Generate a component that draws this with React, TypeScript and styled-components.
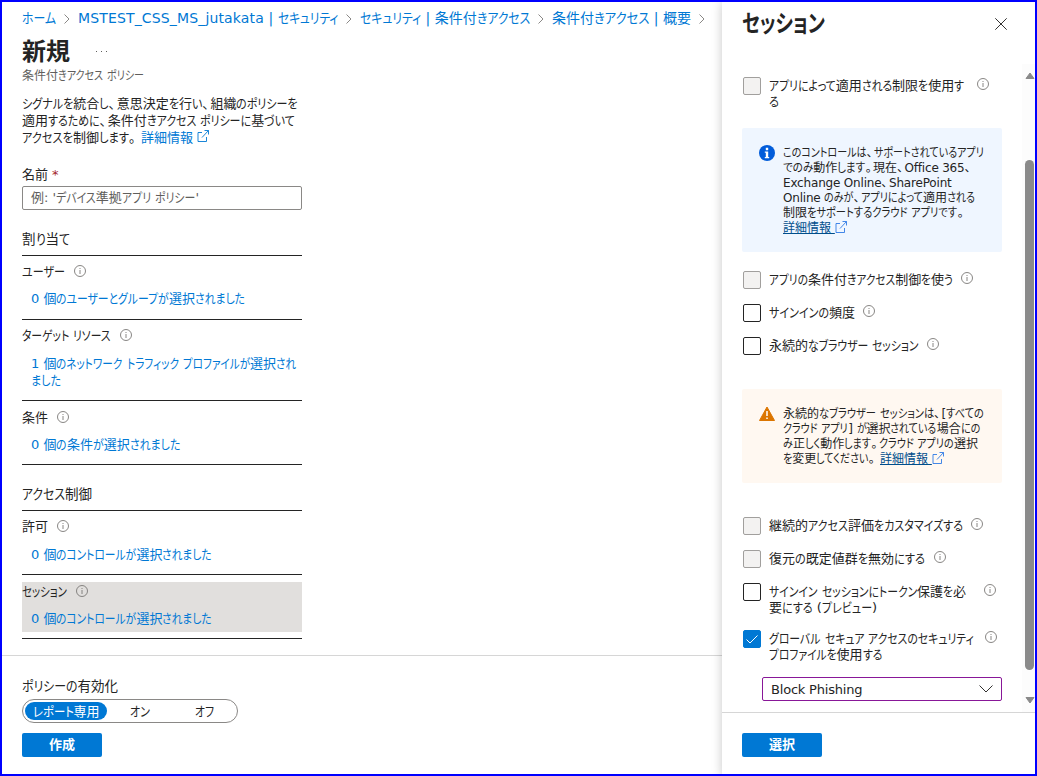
import React, { useLayoutEffect, useRef } from "react";
import styled, { createGlobalStyle, css } from "styled-components";

const Global = createGlobalStyle`
  *, *::before, *::after { box-sizing: border-box; }
  html, body { margin: 0; padding: 0; }
  body {
    width: 1037px; height: 776px; overflow: hidden; background: #fff; color: #242424;
    font: 13px/17px "DejaVu Sans", "Noto Sans CJK JP", sans-serif;
    font-feature-settings: "palt";
  }
  button { font: inherit; font-feature-settings: inherit; }
`;

const Nowrap = styled.span`white-space: pre;`;
const Kana = styled.span`display: inline-block; transform-origin: 0 50%;`;
const Mark = styled.span`letter-spacing: 1.5px;`;
const Latin = styled.span<{ $k: number }>`letter-spacing: ${(p) => p.$k}px;`;

/* Condenses the kana of a line, as a Japanese UI face does, so that the line is w pixels wide. */
function Jp({ t, w, k = -0.2 }: { t: string; w: number; k?: number }) {
  const line = useRef<HTMLSpanElement>(null);
  useLayoutEffect(() => {
    const el = line.current!;
    const runs = Array.from(el.querySelectorAll<HTMLElement>("[data-kana]"));
    runs.forEach((r) => { r.style.transform = ""; r.style.marginRight = ""; });
    const natural = runs.map((r) => r.getBoundingClientRect().width);
    const sum = natural.reduce((a, b) => a + b, 0);
    if (!sum) return;
    const scale = 1 + (w - el.getBoundingClientRect().width) / sum;
    runs.forEach((r, i) => {
      r.style.transform = `scaleX(${scale})`;
      r.style.marginRight = `${natural[i] * (scale - 1)}px`;
    });
  }, [t, w]);
  return (
    <Nowrap ref={line}>
      {t.split(/([ぁ-んァ-ヶー]+|[、。])/).filter(Boolean).map((s, i) =>
        /^[ぁ-んァ-ヶー]/.test(s) ? <Kana key={i} data-kana="">{s}</Kana>
          : /^[、。]/.test(s) ? <Mark key={i}>{s}</Mark>
          : /[A-Za-z]/.test(s) ? <Latin key={i} $k={k}>{s}</Latin> : s
      )}
    </Nowrap>
  );
}

const Frame = styled.div`
  display: grid; grid-template-columns: 720px 313px;
  width: 1037px; height: 776px; border: 2px solid #0000ff; overflow: hidden;
`;
const Main = styled.main`display: flex; flex-direction: column; min-width: 0;`;
const Form = styled.div`height: 653px; padding-left: 20px;`;
const Crumbs = styled.nav`
  display: flex; align-items: center; height: 32px; font-size: 14px; color: #0078d4;
  svg { margin: 1px 8px 0; flex: none; }
`;
const TitleRow = styled.div`display: flex; align-items: center; height: 34px; gap: 26px; padding-top: 1px;`;
const Title = styled.h1`margin: 0; font-size: 24px; line-height: 32px; font-weight: 700;`;
const Dots = styled.span`display: flex; gap: 4px; i { width: 1px; height: 1px; background: #605e5c; }`;
const Sub = styled.div`height: 18px; line-height: 17px; font-size: 12px; color: #605e5c;`;
const Desc = styled.p`margin: 9px 0 0; height: 51px; line-height: 17px;`;
const Line = styled.span<{ $h: number }>`display: flex; align-items: center; height: ${(p) => p.$h}px;`;
const Link = styled.a<{ $dark?: boolean }>`
  color: ${(p) => (p.$dark ? "#004e8c" : "#0078d4")};
  ${(p) => p.$dark && css`text-decoration: underline; text-underline-offset: 1px;`}
`;
const Label = styled.div`margin-top: 20px; height: 20px; line-height: 18px; b { color: #a4262c; font-weight: 400; margin-left: 4px; }`;
const Field = styled.div`
  width: 280px; height: 24px; padding-left: 8px; line-height: 22px; border: 1px solid #8a8886; border-radius: 2px; color: #605e5c;
`;
const Group = styled.h2`
  margin: 20px 0 0; width: 280px; height: 26px; line-height: 19px; font-size: 13.5px; font-weight: 400; border-bottom: 1px solid #242424;
`;
const Item = styled.section<{ $h: number }>`
  width: 280px; height: ${(p) => p.$h}px; padding: 7px 0 6px; border-bottom: 1px solid #242424;
`;
const ItemBody = styled.div<{ $active?: boolean; $up?: boolean }>`
  height: 100%; background: ${(p) => (p.$active ? "#e1dfdd" : "transparent")};
  margin-top: ${(p) => (p.$up ? -1 : 0)}px;
`;
const ItemHead = styled.div`display: flex; align-items: center; gap: 9px; height: 18px;`;
const ItemLink = styled.div<{ $gap?: number }>`
  margin-top: ${(p) => p.$gap ?? 10}px; padding-left: 9px; color: #0078d4; line-height: 17px;
  display: flex; flex-direction: column; align-items: flex-start;
`;
const Footer = styled.footer`border-top: 1px solid #d6d6d6; flex: 1; padding: 20px 20px 0;`;
const FootLabel = styled.div`height: 23px; line-height: 20px; font-size: 13.5px;`;
const Segments = styled.div`
  display: flex; align-items: center; width: 216px; height: 24px; margin-bottom: 10px; padding: 0 2px;
  border: 1px solid #8a8886; border-radius: 12px;
`;
const Segment = styled.span<{ $w: number; $on?: boolean }>`
  display: flex; justify-content: center; width: ${(p) => p.$w}px; height: 18px; line-height: 19px; border-radius: 9px;
  ${(p) => p.$on && css`background: #0078d4; color: #fff;`}
`;
const Primary = styled.button`
  display: block; width: 80px; height: 24px; padding: 0; border: 0; border-radius: 2px; background: #0078d4; color: #fff;
  font-weight: 700; line-height: 22px;
`;
const Panel = styled.aside`display: flex; flex-direction: column; background: #fff; box-shadow: 0 0 10px rgba(0,0,0,.22);`;
const PanelHead = styled.header`
  display: flex; justify-content: space-between; align-items: center; height: 62px; padding: 0 28px 18px 20px;
`;
const Scroll = styled.div`display: grid; grid-template-columns: 300px 13px; height: 648px;`;
const Content = styled.div`padding: 13px 0 0 20px;`;
const Bar = styled.div`display: flex; flex-direction: column; align-items: center; background: #fcfcfc; padding: 8px 0 0 2px;`;
const Thumb = styled.i`width: 9px; height: 510px; margin: 81px 0 27px; border-radius: 5px; background: #8a8a8a;`;
const Check = styled.div<{ $h: number }>`display: flex; height: ${(p) => p.$h}px; padding-left: 1px;`;
const Box = styled.span<{ $s: "off" | "dim" | "on" }>`
  flex: none; width: 18px; height: 18px; margin-right: 8px; border-radius: 2px; display: grid; place-items: center;
  border: 1px solid ${(p) => ({ off: "#242424", dim: "#a19f9d", on: "#0078d4" })[p.$s]};
  background: ${(p) => ({ off: "#fff", dim: "#f3f2f1", on: "#0078d4" })[p.$s]};
`;
const CheckText = styled.div`
  display: flex; flex-direction: column; align-items: flex-start; line-height: 16px; padding-top: 1px;
`;
const InfoSlot = styled.span<{ $gap: number }>`margin: 1px 0 0 ${(p) => p.$gap}px; height: 12px; display: flex;`;
const Notice = styled.div<{ $warn?: boolean; $h: number; $m: number }>`
  display: flex; gap: 8px; width: 260px; height: ${(p) => p.$h}px; margin-bottom: ${(p) => p.$m}px; padding: 17px 0 0 17px;
  border-radius: 2px; font-size: 12px; line-height: 15px; background: ${(p) => (p.$warn ? "#fff8f1" : "#eff6ff")};
`;
const NoticeText = styled.div`display: flex; flex-direction: column; align-items: flex-start; padding-top: 1px;`;
const Select = styled.div`
  display: flex; align-items: center; justify-content: space-between; width: 240px; height: 24px; margin-left: 20px; padding: 0 8px;
  border: 1px solid #881798; border-radius: 2px;
`;
const PanelFoot = styled.footer`border-top: 1px solid #d6d6d6; flex: 1; padding: 20px;`;
const Glyph = styled.svg<{ $ml?: number; $lift?: number }>`
  flex: none; fill: none; margin: 0 0 ${(p) => p.$lift ?? 0}px ${(p) => p.$ml ?? 0}px;
`;

const Info = () => (
  <Glyph width="12" height="12" viewBox="0 0 12 12" stroke="#7a7876" strokeWidth=".9">
    <circle cx="6" cy="6" r="5.5" /><path d="M6 5v4M6 3v1" />
  </Glyph>
);
const External = ({ c = "#0078d4", ml = 0 }: { c?: string; ml?: number }) => (
  <Glyph $ml={ml} $lift={3} width="12" height="12" viewBox="0 0 12 12" stroke={c} strokeWidth=".9">
    <path d="M5 2.500H1v9h8.500V7M5 7.500l6.500-7M7.500.5h4v4" />
  </Glyph>
);
const Chevron = () => (
  <Glyph width="6" height="10" viewBox="0 0 6 10" stroke="#8a8886"><path d="M.5.5 5 5 .5 9.5" /></Glyph>
);
const Arrow = ({ up }: { up?: boolean }) => (
  <svg width="10" height="7" viewBox="0 0 10 7" fill="#8a8a8a" stroke="#8a8a8a" strokeLinejoin="round"><path d={up ? "M5 1 9 6.500H1z" : "M5 6 9 .5H1z"} /></svg>
);

type CheckData = { s: "off" | "dim" | "on"; h: number; gap: number; lines: [string, number][] };
const CheckRow = ({ d }: { d: CheckData }) => (
  <Check $h={d.h}>
    <Box $s={d.s}>{d.s === "on" && <svg width="12" height="9" viewBox="0 0 12 9" fill="none" stroke="#fff"><path d="M.5 4.500 4 8 11.500.5" /></svg>}</Box>
    <CheckText>{d.lines.map(([t, w]) => <Jp key={t} t={t} w={w} />)}</CheckText>
    <InfoSlot $gap={d.gap}><Info /></InfoSlot>
  </Check>
);

const TOP: CheckData = { s: "dim", h: 51, gap: 13, lines: [["アプリによって適用される制限を使用す", 195], ["る", 10]] };
const MID: CheckData[] = [
  { s: "dim", h: 33, gap: 8, lines: [["アプリの条件付きアクセス制御を使う", 184]] },
  { s: "off", h: 33, gap: 8, lines: [["サインインの頻度", 86]] },
  { s: "off", h: 52, gap: 8, lines: [["永続的なブラウザー セッション", 150]] },
];
const LOW: CheckData[] = [
  { s: "dim", h: 33, gap: 8, lines: [["継続的アクセス評価をカスタマイズする", 194]] },
  { s: "dim", h: 33, gap: 9, lines: [["復元の既定値群を無効にする", 156]] },
  { s: "off", h: 47, gap: 18, lines: [["サインイン セッションにトークン保護を必", 197], ["要にする (プレビュー)", 108]] },
  { s: "on", h: 47, gap: 11, lines: [["グローバル セキュア アクセスのセキュリティ", 205], ["プロファイルを使用する", 113]] },
];

export default function App() {
  return (
    <>
      <Global />
      <Frame>
        <Main>
          <Form>
            <Crumbs>
              <Jp t="ホーム" w={34} /><Chevron />
              <Jp t="MSTEST_CSS_MS_jutakata" w={186} k={0.15} /><Jp t=" | セキュリティ" w={74} /><Chevron />
              <Jp t="セキュリティ | 条件付きアクセス" w={170} /><Chevron />
              <Jp t="条件付きアクセス | 概要" w={139} /><Chevron />
            </Crumbs>
            <TitleRow><Title>新規</Title><Dots><i /><i /><i /></Dots></TitleRow>
            <Sub><Jp t="条件付きアクセス ポリシー" w={122} /></Sub>
            <Desc>
              <Line $h={17}><Jp t="シグナルを統合し、意思決定を行い、組織のポリシーを" w={276} /></Line>
              <Line $h={17}><Jp t="適用するために、条件付きアクセス ポリシーに基づいて" w={273} /></Line>
              <Line $h={17}><Jp t="アクセスを制御します。 " w={119} /><Link>詳細情報</Link><External ml={4} /></Line>
            </Desc>
            <Label>名前<b>*</b></Label>
            <Field><Jp t="例: 'デバイス準拠アプリ ポリシー'" w={168} /></Field>
            <Group><Jp t="割り当て" w={48} /></Group>
            <Item $h={64}><ItemBody $up>
              <ItemHead><Jp t="ユーザー" w={43} /><Info /></ItemHead>
              <ItemLink><Jp t="0 個のユーザーとグループが選択されました" w={214} /></ItemLink>
            </ItemBody></Item>
            <Item $h={81}><ItemBody $up>
              <ItemHead><Jp t="ターゲット リソース" w={89} /><Info /></ItemHead>
              <ItemLink $gap={11}><Jp t="1 個のネットワーク トラフィック プロファイルが選択され" w={265} /><Jp t="ました" w={30} /></ItemLink>
            </ItemBody></Item>
            <Item $h={64}><ItemBody>
              <ItemHead>条件<Info /></ItemHead>
              <ItemLink><Jp t="0 個の条件が選択されました" w={149} /></ItemLink>
            </ItemBody></Item>
            <Group><Jp t="アクセス制御" w={70} /></Group>
            <Item $h={64}><ItemBody $up>
              <ItemHead>許可<Info /></ItemHead>
              <ItemLink $gap={11}><Jp t="0 個のコントロールが選択されました" w={181} /></ItemLink>
            </ItemBody></Item>
            <Item $h={64}><ItemBody $active>
              <ItemHead><Jp t="セッション" w={45} /><Info /></ItemHead>
              <ItemLink><Jp t="0 個のコントロールが選択されました" w={181} /></ItemLink>
            </ItemBody></Item>
          </Form>
          <Footer>
            <FootLabel><Jp t="ポリシーの有効化" w={96} /></FootLabel>
            <Segments>
              <Segment $w={82} $on><Jp t="レポート専用" w={67} /></Segment>
              <Segment $w={66}><Jp t="オン" w={20} /></Segment>
              <Segment $w={62}><Jp t="オフ" w={19} /></Segment>
            </Segments>
            <Primary>作成</Primary>
          </Footer>
        </Main>
        <Panel>
          <PanelHead>
            <Title><Jp t="セッション" w={83} /></Title>
            <svg width="12" height="12" viewBox="0 0 12 12" stroke="#323130"><path d="M.3.3 11.700 11.700M11.700.3.3 11.700" /></svg>
          </PanelHead>
          <Scroll>
            <Content>
              <CheckRow d={TOP} />
              <Notice $h={124} $m={19}>
                <svg width="16" height="16" viewBox="0 0 16 16"><circle cx="8" cy="8" r="8" fill="#015cda" /><path d="M6.800 2.800h2.400v2.400H6.800zM5.800 6.500h3.400v5.500h1v1.200H5.800V12h1V7.700h-1z" fill="#fff" /></svg>
                <NoticeText>
                  <Jp t="このコントロールは、サポートされているアプリ" w={201} />
                  <Jp t="でのみ動作します。現在、Office 365、" w={189} />
                  <Jp t="Exchange Online、SharePoint" w={168} k={-0.18} />
                  <Jp t="Online のみが、アプリによって適用される" w={192} />
                  <Jp t="制限をサポートするクラウド アプリです。" w={182} />
                  <Line $h={15}><Link $dark>詳細情報&nbsp;</Link><External c="#2f7ae5" /></Line>
                </NoticeText>
              </Notice>
              {MID.map((d) => <CheckRow key={d.lines[0][0]} d={d} />)}
              <Notice $warn $h={94} $m={34}>
                <svg width="16" height="16" viewBox="0 0 16 16"><path d="M8 1 15.500 14.500H.5z" fill="#db7500" stroke="#db7500" strokeLinejoin="round" /><path d="M8 5v5M8 11.500v1.500" stroke="#fff" strokeWidth="1.500" /></svg>
                <NoticeText>
                  <Jp t="永続的なブラウザー セッションは、[すべての" w={201} />
                  <Jp t="クラウド アプリ] が選択されている場合にの" w={197} />
                  <Jp t="み正しく動作します。クラウド アプリの選択" w={195} />
                  <Line $h={15}><Jp t="を変更してください。 " w={97} /><Link $dark>詳細情報&nbsp;</Link><External c="#2f7ae5" /></Line>
                </NoticeText>
              </Notice>
              {LOW.map((d) => <CheckRow key={d.lines[0][0]} d={d} />)}
              <Select><Jp t="Block Phishing" w={91} /><svg width="14" height="8" viewBox="0 0 14 8" fill="none" stroke="#323130"><path d="M.5.5 7 7 13.500.5" /></svg></Select>
            </Content>
            <Bar><Arrow up /><Thumb /><Arrow /></Bar>
          </Scroll>
          <PanelFoot><Primary>選択</Primary></PanelFoot>
        </Panel>
      </Frame>
    </>
  );
}
